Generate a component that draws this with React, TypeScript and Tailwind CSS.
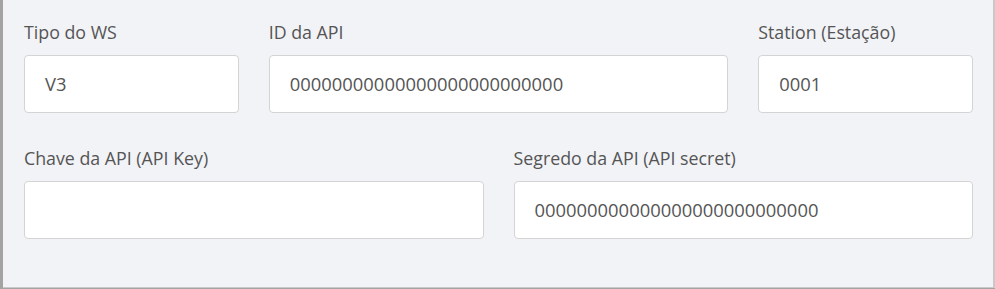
export default function App() {
  return (
    <div
      className="h-[289px] w-[995px] bg-[#a3a3a3] pl-[3px] text-[#555]"
      style={{ fontFamily: '"Open Sans", sans-serif' }}
    >
      <div className="h-[288px] border-r-2 border-b border-[#c9c9c9] bg-[#f2f3f7] pl-[21px] pr-[20px] pt-[20px]">
        <div className="grid grid-cols-4 gap-x-[30px]">
          <Field label="Tipo do WS" value="V3" />
          <Field label="ID da API" value="00000000000000000000000000" wide />
          <Field label="Station (Estação)" value="0001" />
        </div>
        <div className="mt-[33px] grid grid-cols-4 gap-x-[30px]">
          <Field label="Chave da API (API Key)" value="" wide />
          <Field label="Segredo da API (API secret)" value="000000000000000000000000000" wide />
        </div>
      </div>
    </div>
  );
}

function Field({ label, value, wide }: { label: string; value: string; wide?: boolean }) {
  return (
    <div className={wide ? "col-span-2" : ""}>
      <label className="block text-[17.8px] leading-[24px] mb-[11px]">{label}</label>
      <div className="flex h-[58px] items-center rounded-[4px] border border-[#d4d4d4] bg-white pl-[20px] text-[18.4px]">
        {value}
      </div>
    </div>
  );
}
